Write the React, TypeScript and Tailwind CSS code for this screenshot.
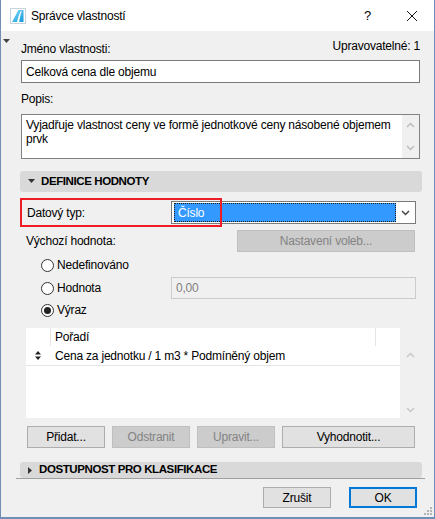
import { type ReactNode } from "react";

const FONT = { fontFamily: '"Liberation Sans", Arial, sans-serif' };

function AppIcon() {
  return (
    <svg width="16" height="16" viewBox="0 0 16 16" className="shrink-0">
      <defs>
        <linearGradient id="ac" x1="0" y1="0" x2="1" y2="1">
          <stop offset="0" stopColor="#7fe0ff" />
          <stop offset="1" stopColor="#1596d8" />
        </linearGradient>
      </defs>
      <rect x="0.5" y="0.5" width="15" height="15" fill="#fff" stroke="#c9d3dc" />
      <path d="M2 14 L8.5 2 L13.5 2 L13.5 14 Z" fill="url(#ac)" />
      <path d="M7 14 C8 9 9.5 5 11 3 L11.8 3 C10.6 6 9.6 10 9.2 14 Z" fill="#fff" />
    </svg>
  );
}

function Chevron({ up, color = "#bdbdbd" }: { up?: boolean; color?: string }) {
  return (
    <svg width="9" height="6" viewBox="0 0 9 6">
      <path d={up ? "M1 5 L4.5 1.5 L8 5" : "M1 1 L4.5 4.5 L8 1"} fill="none" stroke={color} strokeWidth="1.5" />
    </svg>
  );
}

function Radio({ checked, label }: { checked?: boolean; label: string }) {
  return (
    <div className="flex items-center">
      <span className="flex h-[13px] w-[13px] items-center justify-center rounded-full border border-[#333] bg-white">
        {checked && <span className="h-[7px] w-[7px] rounded-full bg-[#222]" />}
      </span>
      <span className="ml-[3px] text-[12px] text-black">{label}</span>
    </div>
  );
}

function Btn({ children, disabled, cls }: { children: ReactNode; disabled?: boolean; cls: string }) {
  return (
    <div
      className={
        "flex items-center justify-center border text-[12px] " +
        (disabled ? "border-[#bfbfbf] bg-[#cccccc] text-[#838383] " : "border-[#adadad] bg-[#e1e1e1] text-black ") +
        cls
      }
    >
      {children}
    </div>
  );
}

function SectionBar({ open, title, h }: { open?: boolean; title: string; h: string }) {
  return (
    <div className={"ml-[-1px] mr-[-2px] flex items-center rounded-[3px] bg-[#d9d9d9] pl-[8px] " + h}>
      {open ? (
        <svg width="7" height="5" viewBox="0 0 7 5">
          <path d="M0 0 L7 0 L3.5 4 Z" fill="#333" />
        </svg>
      ) : (
        <svg width="5" height="7" viewBox="0 0 5 7">
          <path d="M0 0 L4 3.5 L0 7 Z" fill="#333" />
        </svg>
      )}
      <span className="ml-[6px] text-[11.5px] font-bold tracking-[-0.4px] text-black">{title}</span>
    </div>
  );
}

export default function App() {
  return (
    <div
      className="relative h-[519px] w-[435px] overflow-hidden border-x border-b-2 border-[#6f8fb7] bg-[#f0f0f0] tracking-[-0.2px]"
      style={FONT}
    >
      {/* title bar */}
      <div className="flex h-[31px] items-center bg-white pl-[9px]">
        <AppIcon />
        <span className="ml-[5px] text-[12px] text-black">Správce vlastností</span>
        <span className="ml-auto mr-[35px] text-[13px] text-black">?</span>
        <svg width="12" height="12" viewBox="0 0 12 12" className="mr-[16px]">
          <path d="M1 1 L11 11 M11 1 L1 11" stroke="#111" strokeWidth="1" />
        </svg>
      </div>

      <svg width="7" height="4" viewBox="0 0 7 4" className="absolute left-[2px] top-[39px]">
        <path d="M0 0 L7 0 L3.5 4 Z" fill="#444" />
      </svg>

      <div className="pl-[20px] pr-[14px]">
        <div className="mt-[7px] flex h-[19px] justify-between text-[12px] leading-[16px] text-black">
          <span className="self-end">Jméno vlastnosti:</span>
          <span className="self-start">Upravovatelné: 1</span>
        </div>

        <div className="mt-[3px] flex h-[23px] items-center border border-[#7a7a7a] bg-white pl-[4px] text-[12px] text-black">
          Celková cena dle objemu
        </div>

        <div className="mt-[8px] h-[16px] text-[12px] leading-[16px] text-black">Popis:</div>

        <div className="mt-[7px] flex h-[45px] border border-[#828282] bg-white">
          <div className="flex-1 whitespace-nowrap pl-[4px] pt-[3px] text-[12px] leading-[14px] text-black">
            Vyjadřuje vlastnost ceny ve formě jednotkové ceny násobené objemem
            <br />
            prvk
          </div>
          <div className="flex w-[17px] flex-col items-center justify-between bg-[#f0f0f0] py-[7px]">
            <Chevron up />
            <Chevron />
          </div>
        </div>

        <div className="mt-[12px]">
          <SectionBar open title="DEFINICE HODNOTY" h="h-[21px]" />
        </div>

        <div className="relative mt-[6px] flex h-[29px] items-center">
          <span className="w-[150px] pl-[6px] text-[12px] text-black">Datový typ:</span>
          <div className="flex h-[23px] w-[245px] items-center border border-[#7a7a7a] bg-white">
            <div className="ml-[2px] flex h-[19px] w-[222px] items-center bg-[#3399ff] outline-1 outline-dotted outline-[#1a1a1a] outline-offset-[-1px]">
              <span className="pl-[4px] text-[12px] text-white">Číslo</span>
            </div>
            <div className="flex flex-1 items-center justify-center">
              <Chevron color="#444" />
            </div>
          </div>
          <div className="absolute left-[-1px] top-0 h-[29px] w-[202px] border-2 border-[#ee1c25]" />
        </div>

        <div className="mt-[3px] flex h-[22px] items-center">
          <span className="w-[216px] pl-[5px] text-[12px] text-black">Výchozí hodnota:</span>
          <Btn disabled cls="h-[22px] w-[178px]">
            Nastavení voleb...
          </Btn>
        </div>

        <div className="mt-[2px] flex h-[22px] items-center pl-[20px]">
          <Radio label="Nedefinováno" />
        </div>
        <div className="mt-[1px] flex h-[22px] items-center pl-[20px]">
          <div className="w-[130px]">
            <Radio label="Hodnota" />
          </div>
          <div className="flex h-[22px] w-[245px] items-center border border-[#cccccc] bg-[#f0f0f0] pl-[4px] text-[12px] text-[#808080]">
            0,00
          </div>
        </div>
        <div className="flex h-[22px] items-center pl-[20px]">
          <Radio checked label="Výraz" />
        </div>

        <div className="ml-[5px] mt-[7px] flex h-[90px]">
          <div className="flex w-[374px] flex-col bg-white">
            <div className="flex h-[18px] text-[12px] text-black">
              <div className="w-[24px]" />
              <div className="flex flex-1 items-center border-l border-[#e5e5e5] pl-[4px]">Pořadí</div>
              <div className="w-[25px] border-l border-[#e5e5e5]" />
            </div>
            <div className="flex h-[20px] items-center border-b border-[#e5e5e5] text-[12px] text-black">
              <div className="flex w-[24px] justify-center">
                <svg width="6" height="9" viewBox="0 0 6 9">
                  <path d="M0 3.5 L3 0 L6 3.5 Z M0 5.5 L6 5.5 L3 9 Z" fill="#222" />
                </svg>
              </div>
              <span className="pl-[5px]">Cena za jednotku / 1 m3 * Podmíněný objem</span>
            </div>
          </div>
          <div className="flex w-[20px] flex-col items-center justify-between pb-[5px] pt-[24px]">
            <Chevron up color="#c8c8c8" />
            <Chevron color="#c8c8c8" />
          </div>
        </div>

        <div className="mt-[8px] flex h-[22px] pl-[6px]">
          <Btn cls="h-[22px] w-[78px]">Přidat...</Btn>
          <Btn disabled cls="ml-[7px] h-[22px] w-[78px]">
            Odstranit
          </Btn>
          <Btn disabled cls="ml-[7px] h-[22px] w-[78px]">
            Upravit...
          </Btn>
          <Btn cls="ml-[7px] h-[22px] w-[133px]">Vyhodnotit...</Btn>
        </div>

        <div className="mt-[14px]">
          <SectionBar title="DOSTUPNOST PRO KLASIFIKACE" h="h-[16px]" />
        </div>
      </div>

      <div className="ml-[15px] mr-[9px] h-px bg-[#a0a0a0]" />

      <div className="mt-[8px] flex justify-end pr-[17px]">
        <Btn cls="h-[21px] w-[68px]">Zrušit</Btn>
        <div className="ml-[18px] flex h-[21px] w-[68px] items-center justify-center border-2 border-[#0078d7] bg-[#e1e1e1] text-[12px] text-black">
          OK
        </div>
      </div>

      <svg width="8" height="8" viewBox="0 0 8 8" className="absolute bottom-[2px] right-[2px]">
        <g fill="#b5b5b5">
          <rect x="6" y="0" width="2" height="2" />
          <rect x="3" y="3" width="2" height="2" />
          <rect x="6" y="3" width="2" height="2" />
          <rect x="0" y="6" width="2" height="2" />
          <rect x="3" y="6" width="2" height="2" />
          <rect x="6" y="6" width="2" height="2" />
        </g>
      </svg>
    </div>
  );
}
